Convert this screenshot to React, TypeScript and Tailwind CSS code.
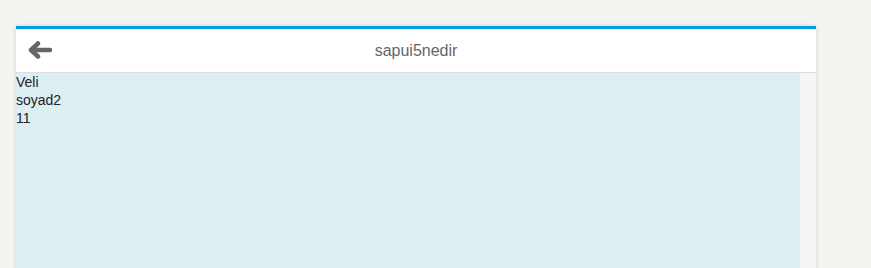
export default function App() {
  const rows = ["Veli", "soyad2", "11"];

  return (
    <div className="h-screen overflow-hidden bg-[#f4f3ef] pt-[26px] pl-4 font-['Liberation_Sans',Arial,sans-serif]">
      <div className="w-[800px] h-[400px] flex flex-col shadow-[0_0_4px_rgba(0,0,0,0.15)]">
        <div className="h-[3px] bg-[#009de0]" />

        <div className="relative h-[44px] flex items-center justify-center bg-white border-b border-[#dddddd]">
          <button className="absolute left-[12px] top-[12px] w-[24px] h-[18px] flex items-center justify-center">
            <svg width="24" height="18" viewBox="0 0 24 18" fill="none">
              <path
                d="M22 9H5"
                stroke="#666666"
                strokeWidth="4.5"
                strokeLinecap="round"
              />
              <path
                d="M10 2.5L3 9L10 15.5"
                stroke="#666666"
                strokeWidth="4.5"
                strokeLinecap="round"
                strokeLinejoin="round"
              />
            </svg>
          </button>
          <span className="text-[16px] text-[#666666]">sapui5nedir</span>
        </div>

        <div className="flex-1 flex">
          <div className="flex-1 bg-[#ddeef2] text-[14px] leading-[18px] text-[#222222]">
            {rows.map((r) => (
              <div key={r}>{r}</div>
            ))}
          </div>
          <div className="w-4 bg-[#f5f5f5]" />
        </div>
      </div>
    </div>
  );
}
